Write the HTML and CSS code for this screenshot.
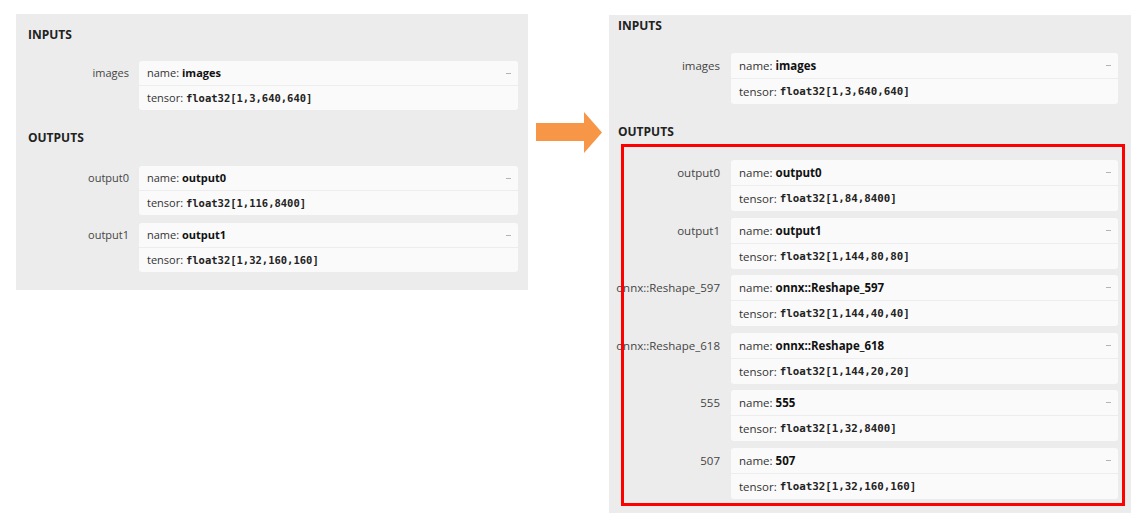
FILE: index.html
```html
<!DOCTYPE html>
<html>
<head>
<meta charset="utf-8">
<link rel="stylesheet" href="styles.css">
</head>
<body>
<div class="stage">
  <section class="panel panel-a">
    <h3 class="sec sec-first">INPUTS</h3>
    <div class="list">
      <div class="item">
        <div class="lbl">images</div>
        <div class="card">
          <div class="row"><span>name: <b>images</b></span><span class="dash"></span></div>
          <div class="row">tensor:&nbsp;<code>float32[1,3,640,640]</code></div>
        </div>
      </div>
    </div>
    <h3 class="sec">OUTPUTS</h3>
    <div class="list">
      <div class="item">
        <div class="lbl">output0</div>
        <div class="card">
          <div class="row"><span>name: <b>output0</b></span><span class="dash"></span></div>
          <div class="row">tensor:&nbsp;<code>float32[1,116,8400]</code></div>
        </div>
      </div>
      <div class="item">
        <div class="lbl">output1</div>
        <div class="card">
          <div class="row"><span>name: <b>output1</b></span><span class="dash"></span></div>
          <div class="row">tensor:&nbsp;<code>float32[1,32,160,160]</code></div>
        </div>
      </div>
    </div>
  </section>

  <div class="arrow">
    <svg width="66" height="42" viewBox="0 0 66 42">
      <polygon points="0,11 48,11 48,0 66,20.5 48,41 48,29 0,29" fill="#f79646"/>
    </svg>
  </div>

  <section class="panel panel-b">
    <h3 class="sec sec-first">INPUTS</h3>
    <div class="list">
      <div class="item">
        <div class="lbl">images</div>
        <div class="card">
          <div class="row"><span>name: <b>images</b></span><span class="dash"></span></div>
          <div class="row">tensor:&nbsp;<code>float32[1,3,640,640]</code></div>
        </div>
      </div>
    </div>
    <h3 class="sec">OUTPUTS</h3>
    <div class="outs">
      <div class="list">
        <div class="item">
          <div class="lbl">output0</div>
          <div class="card">
            <div class="row"><span>name: <b>output0</b></span><span class="dash"></span></div>
            <div class="row">tensor:&nbsp;<code>float32[1,84,8400]</code></div>
          </div>
        </div>
        <div class="item">
          <div class="lbl">output1</div>
          <div class="card">
            <div class="row"><span>name: <b>output1</b></span><span class="dash"></span></div>
            <div class="row">tensor:&nbsp;<code>float32[1,144,80,80]</code></div>
          </div>
        </div>
        <div class="item">
          <div class="lbl">onnx::Reshape_597</div>
          <div class="card">
            <div class="row"><span>name: <b>onnx::Reshape_597</b></span><span class="dash"></span></div>
            <div class="row">tensor:&nbsp;<code>float32[1,144,40,40]</code></div>
          </div>
        </div>
        <div class="item">
          <div class="lbl">onnx::Reshape_618</div>
          <div class="card">
            <div class="row"><span>name: <b>onnx::Reshape_618</b></span><span class="dash"></span></div>
            <div class="row">tensor:&nbsp;<code>float32[1,144,20,20]</code></div>
          </div>
        </div>
        <div class="item">
          <div class="lbl">555</div>
          <div class="card">
            <div class="row"><span>name: <b>555</b></span><span class="dash"></span></div>
            <div class="row">tensor:&nbsp;<code>float32[1,32,8400]</code></div>
          </div>
        </div>
        <div class="item">
          <div class="lbl">507</div>
          <div class="card">
            <div class="row"><span>name: <b>507</b></span><span class="dash"></span></div>
            <div class="row">tensor:&nbsp;<code>float32[1,32,160,160]</code></div>
          </div>
        </div>
      </div>
      <div class="hl"></div>
    </div>
  </section>
</div>
</body>
</html>
```

FILE: styles.css
```css
html, body {
  margin: 0;
  padding: 0;
  background: #ffffff;
}

body {
  font-family: "Open Sans", "Noto Sans", sans-serif;
  color: #333;
}

.stage {
  display: flex;
  align-items: flex-start;
}

.panel {
  background: #ececec;
  box-sizing: border-box;
  position: relative;
}

.panel-a {
  margin: 14px 0 0 16px;
  width: 512px;
  padding: 11px 10px 18px 0;
  --lbl-w: 113px;
  --gap: 10px;
  --row-h: 24px;
  --item-gap: 8px;
  --fs: 11px;
  --mono: 10.5px;
  --head-pad: 12px;
}

.panel-b {
  margin: 15px 0 0 7px;
  width: 522px;
  padding: 1px 13px 14px 0;
  --lbl-w: 111px;
  --gap: 11px;
  --row-h: 25px;
  --item-gap: 6.5px;
  --fs: 11.5px;
  --mono: 10.8px;
  --head-pad: 9px;
}

.arrow {
  margin: 112px 0 0 8px;
  width: 66px;
  height: 42px;
}

.arrow svg {
  display: block;
}

.sec {
  margin: 18px 0 18px;
  padding-left: var(--head-pad);
  height: 20px;
  line-height: 20px;
  font-size: 12px;
  font-weight: 700;
  color: #222;
}

.sec-first {
  margin-top: 0;
  margin-bottom: 16px;
}

.panel-b .sec-first {
  margin-bottom: 17px;
}

.list {
  display: flex;
  flex-direction: column;
  gap: var(--item-gap);
}

.item {
  display: flex;
  gap: var(--gap);
  align-items: flex-start;
}

.lbl {
  width: var(--lbl-w);
  flex: none;
  text-align: right;
  white-space: nowrap;
  direction: rtl;
  overflow: visible;
  font-size: var(--fs);
  line-height: var(--row-h);
  color: #444;
}

.card {
  flex: 1;
  background: #fafafa;
  border-radius: 3px;
  font-size: var(--fs);
  color: #333;
}

.row {
  height: var(--row-h);
  line-height: var(--row-h);
  padding: 0 7px 0 8px;
  display: flex;
  align-items: center;
  justify-content: space-between;
  white-space: nowrap;
}

.row + .row {
  border-top: 1px solid #ededed;
  justify-content: flex-start;
}

.row b {
  font-weight: 700;
  color: #111;
}

.row code {
  font-family: "DejaVu Sans Mono", "Liberation Mono", monospace;
  font-size: var(--mono);
  font-weight: 700;
  color: #222;
}

.dash {
  width: 5px;
  height: 1px;
  background: #b4b4b4;
}

.outs {
  position: relative;
  padding-top: 0;
}

.hl {
  position: absolute;
  left: 12px;
  top: -16px;
  right: -7px;
  bottom: -7px;
  border: 3px solid #ff0000;
  pointer-events: none;
}
```
